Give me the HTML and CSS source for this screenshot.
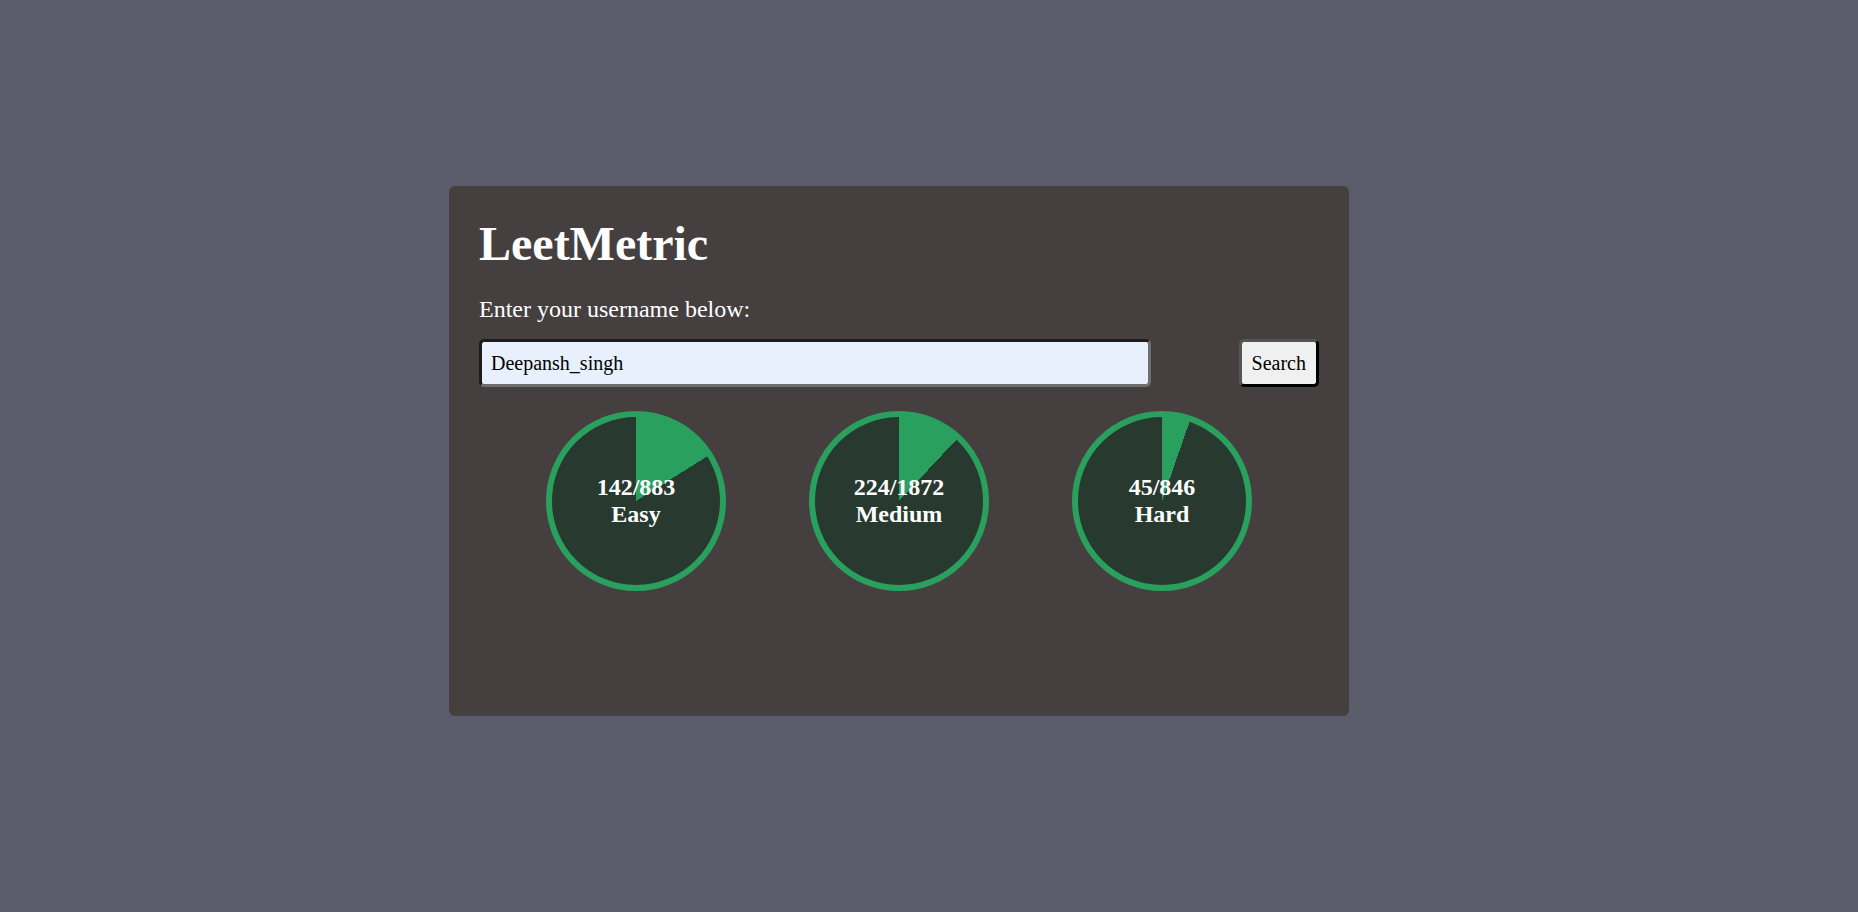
FILE: index.html
```html
<!DOCTYPE html>
<html lang="en">
<head>
<meta charset="UTF-8">
<title>LeetMetric</title>
<link rel="stylesheet" href="styles.css">
</head>
<body>
<div class="card">
  <h1 class="title">LeetMetric</h1>
  <p class="prompt">Enter your username below:</p>
  <div class="search-row">
    <input class="user-input" type="text" value="Deepansh_singh">
    <button class="search-btn">Search</button>
  </div>
  <div class="progress-row">
    <div class="circle" style="background: conic-gradient(#29a05d 0% 16.08%, #283a2f 16.08% 100%);">
      <span>142/883</span><span>Easy</span>
    </div>
    <div class="circle" style="background: conic-gradient(#29a05d 0% 11.97%, #283a2f 11.97% 100%);">
      <span>224/1872</span><span>Medium</span>
    </div>
    <div class="circle" style="background: conic-gradient(#29a05d 0% 5.32%, #283a2f 5.32% 100%);">
      <span>45/846</span><span>Hard</span>
    </div>
  </div>
</div>
</body>
</html>
```
FILE: styles.css
```css
* { box-sizing: border-box; }
html, body {
  margin: 0;
  padding: 0;
  height: 100%;
  overflow: hidden;
}
body {
  background: #5a5b6b;
  font-family: "Liberation Serif", "Times New Roman", serif;
  color: #ffffff;
}
.card {
  width: 900px;
  height: 530px;
  margin: 186px 0 0 449px;
  padding: 30px;
  background: #45403f;
  border-radius: 6px;
}
.title {
  margin: 0;
  font-size: 48px;
  font-weight: bold;
  line-height: normal;
}
.prompt {
  margin: 25px 0 0;
  font-size: 24px;
  line-height: normal;
}
.search-row {
  margin-top: 16px;
  display: flex;
  justify-content: space-between;
  align-items: center;
}
.user-input {
  width: 80%;
  height: 48px;
  padding: 0 9px;
  font-family: "Liberation Serif", "Times New Roman", serif;
  font-size: 20px;
  color: #000;
  background: #e8f0fe;
  border: 3px solid;
  border-color: #1c1c1c #6e6e6e #6e6e6e #1c1c1c;
  border-radius: 5px;
  outline: none;
}
.search-btn {
  height: 48px;
  padding: 0 10px;
  font-family: "Liberation Serif", "Times New Roman", serif;
  font-size: 20px;
  color: #000;
  background: #f0f0f0;
  border: 3px solid;
  border-color: #555555 #000000 #000000 #555555;
  border-radius: 5px;
}
.progress-row {
  margin-top: 24px;
  display: flex;
  justify-content: center;
  gap: 83px;
}
.circle {
  width: 180px;
  height: 180px;
  border: 6px solid #29a05d;
  border-radius: 50%;
  display: flex;
  flex-direction: column;
  align-items: center;
  justify-content: center;
  font-size: 24px;
  font-weight: bold;
  line-height: normal;
  color: #ffffff;
}
```
